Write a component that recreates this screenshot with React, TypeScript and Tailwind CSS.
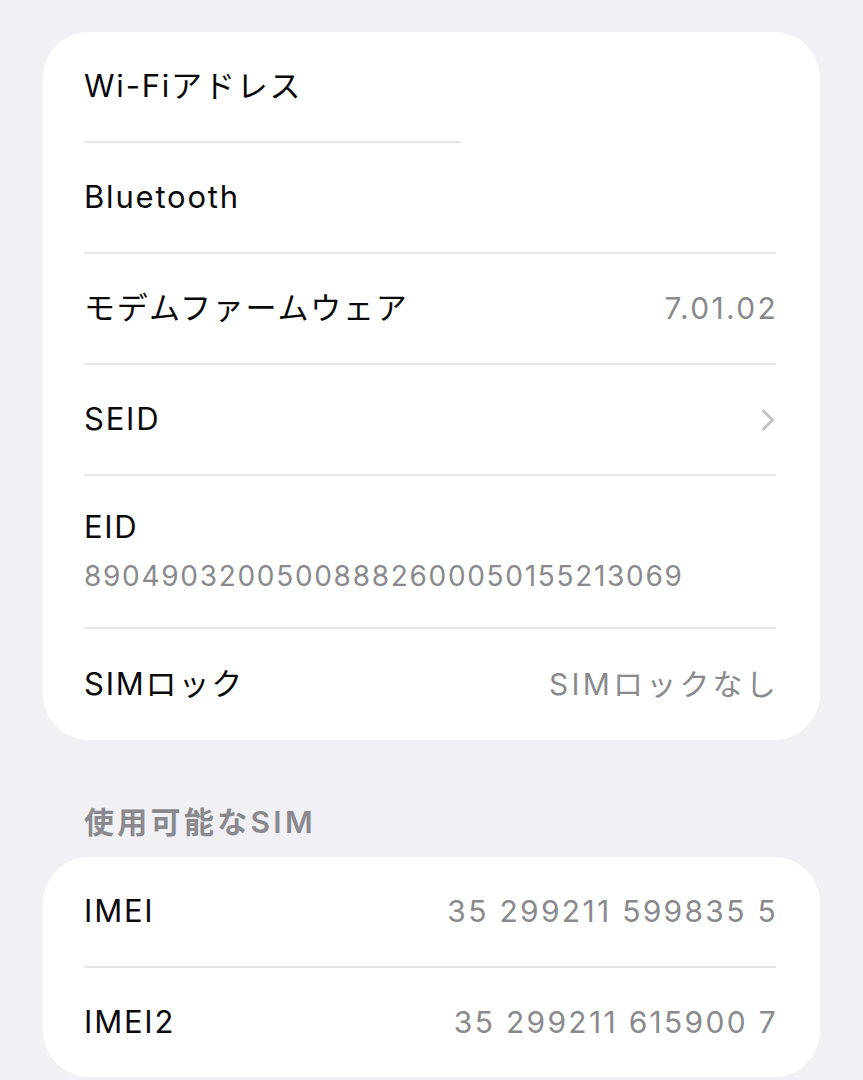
import { ChevronRight } from 'lucide-react';

const font = { fontFamily: 'Inter, "Noto Sans CJK JP", sans-serif' };

function Row({ label, value, chevron, divider = true, short }: { label: string; value?: string; chevron?: boolean; divider?: boolean; short?: boolean }) {
  return (
    <div className="pl-[41px] pr-[44px]">
      <div className="h-[109px] flex items-center justify-between">
        <span className="text-[31px] text-[#0a0a0a] tracking-[1.8px]">{label}</span>
        {value && <span className="text-[30px] text-[#8a8a8e] tracking-[2.3px] mr-[-2px]">{value}</span>}
        {chevron && <ChevronRight className="w-[36px] h-[36px] text-[#c2c2c6] mr-[-10px]" strokeWidth={2} />}
      </div>
      {divider && <div className={`h-[2px] bg-[#e5e5ea] ${short ? 'w-[377px]' : 'w-full'}`} />}
    </div>
  );
}

export default function App() {
  return (
    <div className="min-h-[1080px] bg-[#f0f0f5] pt-[32px] px-[43px] overflow-hidden" style={font}>
      <div className="bg-white rounded-[46px] w-[777px]">
        <Row label="Wi-Fiアドレス" short />
        <Row label="Bluetooth" />
        <Row label="モデムファームウェア" value="7.01.02" />
        <Row label="SEID" chevron />
        <div className="pl-[41px] pr-[44px]">
          <div className="h-[151px] flex flex-col justify-center">
            <span className="text-[31px] text-[#0a0a0a] leading-[40px] tracking-[1.6px]">EID</span>
            <span className="text-[28px] text-[#8a8a8e] leading-[40px] mt-[9px] tracking-[1.7px]">89049032005008882600050155213069</span>
          </div>
          <div className="h-[2px] bg-[#e5e5ea]" />
        </div>
        <div className="pl-[41px] pr-[44px]">
          <div className="h-[111px] flex items-center justify-between">
            <span className="text-[31px] text-[#0a0a0a] tracking-[1.8px]">SIMロック</span>
            <span className="text-[30px] text-[#8a8a8e] tracking-[3.2px] mr-[-3px]">SIMロックなし</span>
          </div>
        </div>
      </div>
      <div className="pl-[41px] pt-[60px] pb-[13px] text-[30px] font-semibold text-[#8a8a8e] leading-[44px] tracking-[3.3px]">使用可能なSIM</div>
      <div className="bg-white rounded-[46px] w-[777px]">
        <Row label="IMEI" value="35 299211 599835 5" />
        <Row label="IMEI2" value="35 299211 615900 7" divider={false} />
      </div>
    </div>
  );
}
